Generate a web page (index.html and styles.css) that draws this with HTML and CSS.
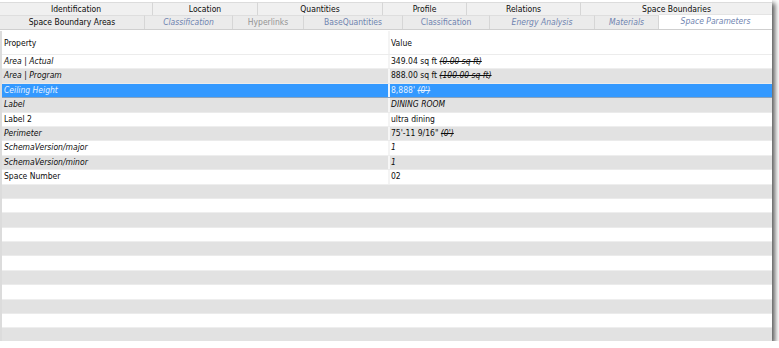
FILE: index.html
```html
<!DOCTYPE html>
<html lang="en">
<head>
    <meta charset="UTF-8">
    <title>Space Parameters</title>
    <link rel="stylesheet" href="styles.css">
</head>
<body>
    <div class="window">
        <div class="tab-row top-row">
            <div class="tab w-ident">Identification</div>
            <div class="tab w-loc">Location</div>
            <div class="tab w-quant">Quantities</div>
            <div class="tab w-prof">Profile</div>
            <div class="tab w-rel">Relations</div>
            <div class="tab w-bound">Space Boundaries</div>
        </div>
        <div class="tab-row sub-row">
            <div class="tab w-areas">Space Boundary Areas</div>
            <div class="tab w-class link italic">Classification</div>
            <div class="tab w-hyper muted">Hyperlinks</div>
            <div class="tab w-base link">BaseQuantities</div>
            <div class="tab w-class2 link">Classification</div>
            <div class="tab w-energy link italic">Energy Analysis</div>
            <div class="tab w-mat link italic">Materials</div>
            <div class="tab w-params link italic active">Space Parameters</div>
        </div>

        <div class="grid">
            <div class="grid-head">
                <div class="cell name">Property</div>
                <div class="cell value">Value</div>
            </div>

            <div class="grid-row">
                <div class="cell name italic">Area | Actual</div>
                <div class="cell value">349.04 sq ft <s class="italic">(0.00 sq ft)</s></div>
            </div>
            <div class="grid-row alt">
                <div class="cell name italic">Area | Program</div>
                <div class="cell value">888.00 sq ft <s class="italic">(100.00 sq ft)</s></div>
            </div>
            <div class="grid-row selected">
                <div class="cell name italic">Ceiling Height</div>
                <div class="cell value">8,888' <s class="italic">(0')</s></div>
            </div>
            <div class="grid-row alt">
                <div class="cell name italic">Label</div>
                <div class="cell value italic">DINING ROOM</div>
            </div>
            <div class="grid-row">
                <div class="cell name">Label 2</div>
                <div class="cell value">ultra dining</div>
            </div>
            <div class="grid-row alt">
                <div class="cell name italic">Perimeter</div>
                <div class="cell value">75'-11 9/16" <s class="italic">(0')</s></div>
            </div>
            <div class="grid-row">
                <div class="cell name italic">SchemaVersion/major</div>
                <div class="cell value italic">1</div>
            </div>
            <div class="grid-row alt">
                <div class="cell name italic">SchemaVersion/minor</div>
                <div class="cell value italic">1</div>
            </div>
            <div class="grid-row">
                <div class="cell name">Space Number</div>
                <div class="cell value">02</div>
            </div>

            <div class="grid-row empty alt"></div>
            <div class="grid-row empty"></div>
            <div class="grid-row empty alt"></div>
            <div class="grid-row empty"></div>
            <div class="grid-row empty alt"></div>
            <div class="grid-row empty"></div>
            <div class="grid-row empty alt"></div>
            <div class="grid-row empty"></div>
            <div class="grid-row empty alt"></div>
            <div class="grid-row empty"></div>
            <div class="grid-row empty alt"></div>
        </div>
    </div>
</body>
</html>
```

FILE: styles.css
```css
body {
    margin: 0;
    background: #ffffff;
    font-family: "DejaVu Sans Condensed", "Liberation Sans", sans-serif;
    font-size: 8.5px;
    color: #0c0c0c;
}

.window {
    width: 772px;
    height: 341px;
    padding-top: 2px;
    box-sizing: border-box;
    background: #ffffff;
    box-shadow: 3px 3px 5px rgba(0, 0, 0, 0.65);
    overflow: hidden;
    display: flex;
    flex-direction: column;
}

.italic {
    font-style: italic;
}

/* tabs */
.tab-row {
    display: flex;
}

.tab {
    box-sizing: border-box;
    text-align: center;
    white-space: nowrap;
    border-right: 1px solid #d6d6d6;
}

.top-row .tab {
    height: 13px;
    line-height: 12px;
    background: #f0f0f0;
    border-top: 1px solid #dcdcdc;
}

.sub-row {
    height: 14px;
    border-bottom: 1px solid #cfcfcf;
    background: #ececec;
}

.sub-row .tab {
    height: 14px;
    line-height: 13px;
    background: #ebebeb;
    border-top: 1px solid #dedede;
}

.tab.link {
    color: #6f84b0;
}

.tab.muted {
    color: #949494;
}

.tab.active {
    background: #ffffff;
    height: 15px;
    margin-top: -1px;
    margin-bottom: -1px;
    border-top: 1px solid #e4e4e4;
    line-height: 12px;
    border-right: none;
}

.w-ident { width: 153px; }
.w-loc { width: 105px; }
.w-quant { width: 125px; }
.w-prof { width: 84px; }
.w-rel { width: 114px; }
.w-bound { flex: 1; border-right: none; }

.w-areas { width: 145px; }
.w-class { width: 88px; }
.w-hyper { width: 71px; }
.w-base { width: 99px; }
.w-class2 { width: 87px; }
.w-energy { width: 105px; }
.w-mat { width: 64px; }
.w-params { flex: 1; }

/* property grid */
.grid {
    flex: 1;
    border-left: 2px solid #dcdcdc;
    margin-top: 1px;
}

.grid-head {
    display: flex;
    height: 23px;
    align-items: center;
    border-bottom: 1px solid #ececec;
}

.grid-head .value {
    align-self: stretch;
    display: flex;
    align-items: center;
    border-left: 1px solid #d0d0d0;
}

.grid-row {
    display: flex;
    height: 14.4px;
    box-sizing: border-box;
    line-height: 13px;
    border-bottom: 1px solid #eeeeee;
    background: #ffffff;
}

.grid-row.alt {
    background: #e2e2e2;
    border-bottom-color: #ebebeb;
}

.grid-row.selected {
    background: #3399ff;
    color: #e6f2ff;
    border-bottom-color: #8aa3bd;
}

.cell {
    white-space: nowrap;
    overflow: hidden;
}

.cell.name {
    width: 384px;
    padding-left: 2px;
}

.cell.value {
    flex: 1;
    padding-left: 1px;
    border-left: 2px solid #f4f4f4;
}

.grid-row.alt .cell.value {
    border-left-color: #f6f6f6;
}

.grid-row.selected .cell.value {
    border-left-color: #eaf4ff;
}
```
